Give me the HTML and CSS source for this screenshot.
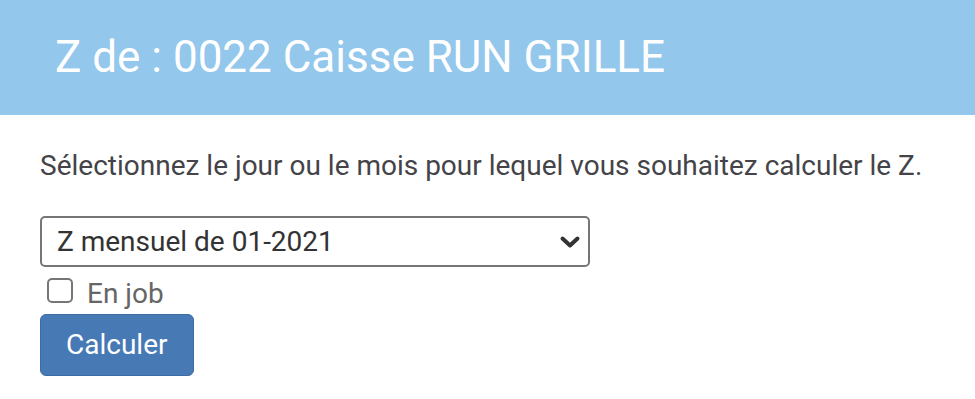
FILE: index.html
```html
<!DOCTYPE html>
<html lang="fr">
<head>
<meta charset="utf-8">
<title>Z de : 0022 Caisse RUN GRILLE</title>
<link rel="stylesheet" href="styles.css">
</head>
<body>
<header class="page-header">
  <h1 class="page-title">Z de : 0022 Caisse RUN GRILLE</h1>
</header>
<main class="content">
  <p class="intro">Sélectionnez le jour ou le mois pour lequel vous souhaitez calculer le Z.</p>
  <form class="z-form">
    <div class="select-wrap">
      <select class="period-select">
        <option>Z mensuel de 01-2021</option>
      </select>
      <svg class="chevron" width="22" height="14" viewBox="0 0 22 14" aria-hidden="true">
        <path d="M3.5 3.5 L11 10.5 L18.5 3.5" fill="none" stroke="#333" stroke-width="4" stroke-linecap="round" stroke-linejoin="round"/>
      </svg>
    </div>
    <label class="check-row">
      <input type="checkbox" class="check">
      <span class="check-label">En job</span>
    </label>
    <button type="button" class="btn-primary">Calculer</button>
  </form>
</main>
</body>
</html>
```

FILE: styles.css
```css
html, body {
  margin: 0;
  padding: 0;
  background: #ffffff;
}

body {
  font-family: Roboto, "Liberation Sans", sans-serif;
  font-size: 28px;
  line-height: 40px;
  color: #444448;
}

.page-header {
  background: #93c7ec;
  height: 115px;
  box-sizing: border-box;
  padding: 31px 0 0 55px;
}

.page-title {
  margin: 0;
  font-size: 44px;
  line-height: 52px;
  font-weight: 400;
  color: #ffffff;
}

.content {
  padding: 0 40px;
}

.intro {
  margin: 31px 0 0 0;
}

.z-form {
  display: flex;
  flex-direction: column;
  align-items: flex-start;
  margin-top: 30px;
}

.select-wrap {
  position: relative;
  width: 550px;
}

.period-select {
  appearance: none;
  -webkit-appearance: none;
  display: block;
  width: 550px;
  height: 51px;
  box-sizing: border-box;
  border: 2px solid #767676;
  border-radius: 5px;
  background: #ffffff;
  padding: 0 40px 0 15px;
  font-family: Roboto, "Liberation Sans", sans-serif;
  font-size: 28px;
  color: #333333;
}

.chevron {
  position: absolute;
  right: 9px;
  top: 19px;
  pointer-events: none;
}

.check-row {
  display: flex;
  align-items: flex-start;
  margin-top: 7px;
  color: #666666;
}

.check {
  appearance: none;
  -webkit-appearance: none;
  width: 26px;
  height: 25px;
  box-sizing: border-box;
  border: 2px solid #767676;
  border-radius: 5px;
  background: #ffffff;
  margin: 4px 14px 0 7px;
}

.btn-primary {
  display: block;
  margin-top: 0;
  padding: 10px 25px;
  border: 1px solid #3d6ca5;
  border-radius: 6px;
  background: #4779b5;
  color: #ffffff;
  font-family: Roboto, "Liberation Sans", sans-serif;
  font-size: 28px;
  line-height: 40px;
}
```
